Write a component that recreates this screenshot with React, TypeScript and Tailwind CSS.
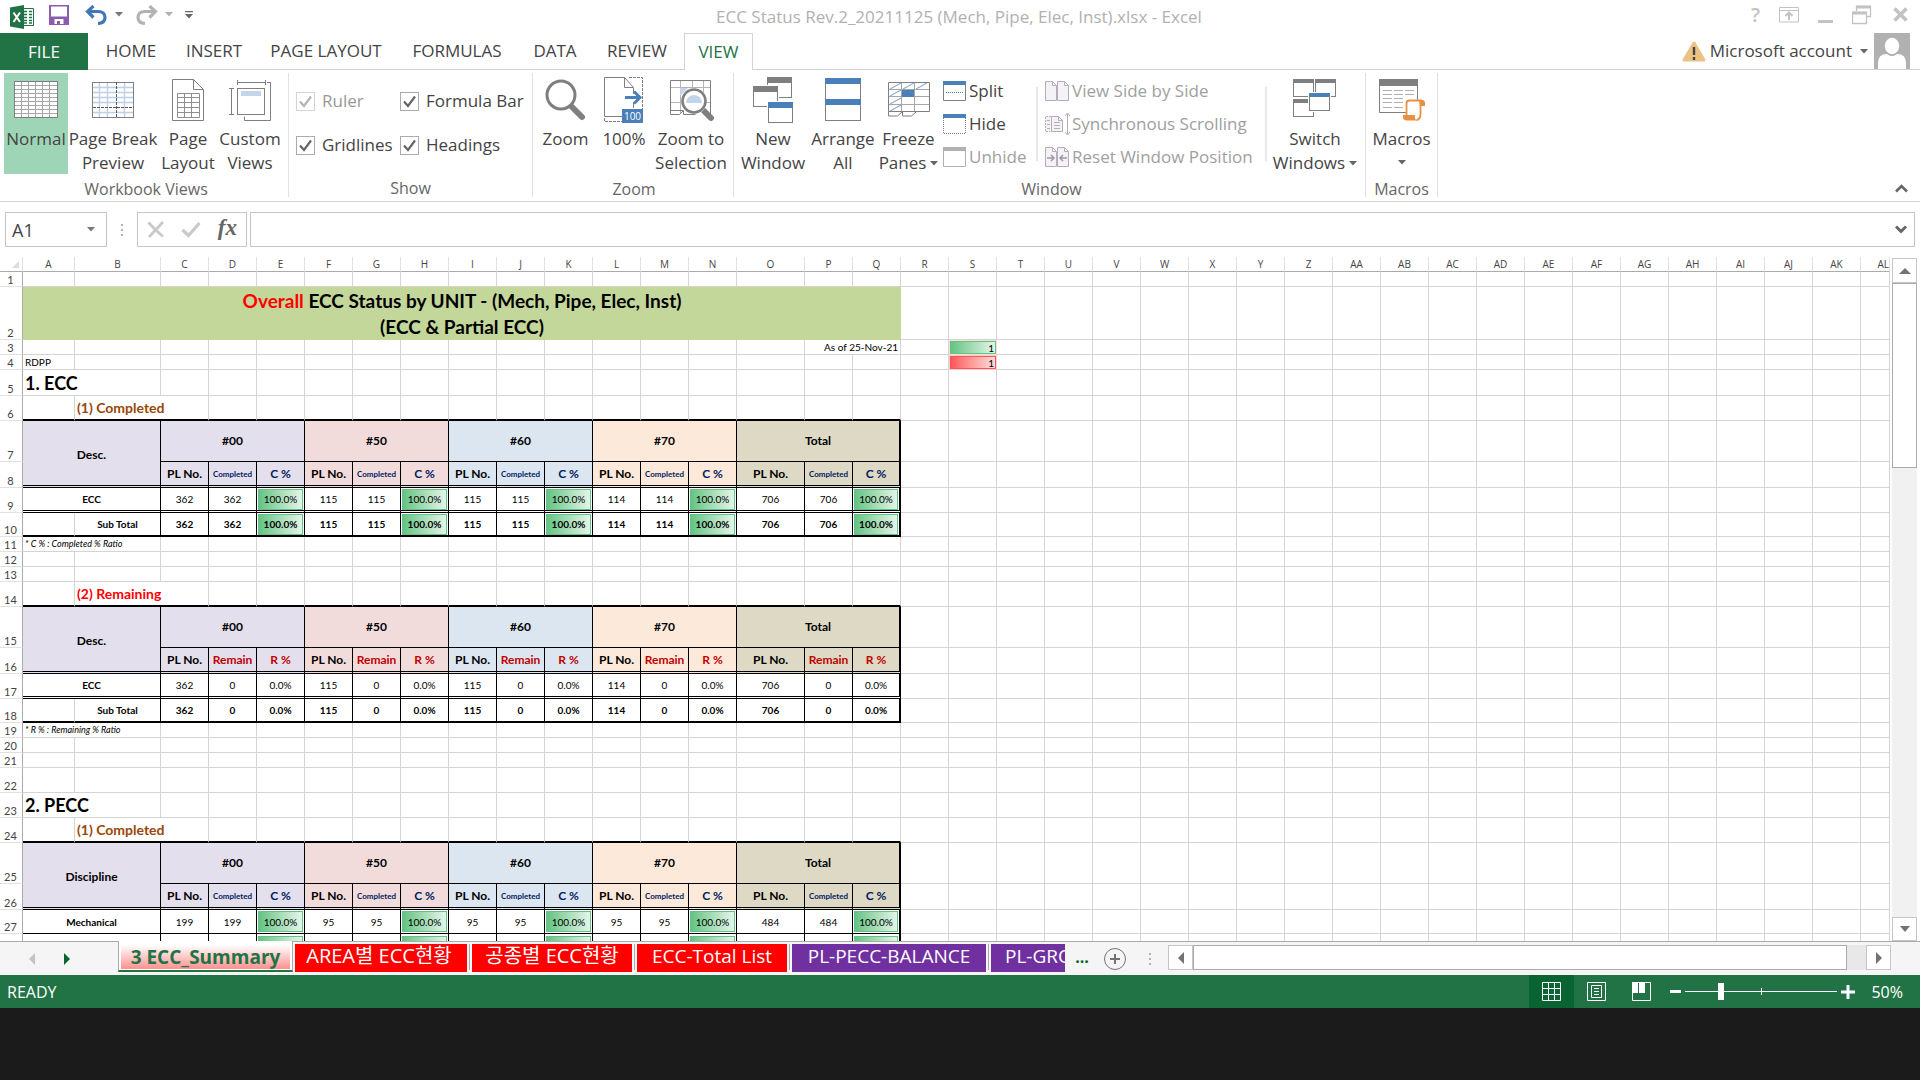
import React from "react";

/* ---------- Ribbon icons ---------- */

const G = "#7f7f7f";
const B = "#4a7fb8";

function NormalIcon() {
  return (
    <svg width="44" height="48" viewBox="0 0 44 48" fill="none">
      <rect x="0.5" y="5.5" width="43" height="36" fill="#fff" stroke={G} />
      <path d="M7.5 6v35M14.5 6v35M21.5 6v35M28.5 6v35M35.5 6v35M1 9.5h42M1 13.5h42M1 17.5h42M1 21.5h42M1 25.5h42M1 29.5h42M1 33.5h42M1 37.5h42" stroke="#a6a6a6" />
    </svg>
  );
}

function PageBreakIcon() {
  return (
    <svg width="42" height="48" viewBox="0 0 42 48" fill="none">
      <path d="M7.5 7v34M15.5 7v34M32.5 7v34M1 11.5h40M1 16.5h40M1 21.5h40M1 26.5h40M1 36.5h40" stroke="#bdd0e6" strokeWidth="1.4" />
      <rect x="0.5" y="6.5" width="41" height="35" stroke={G} />
      <path d="M24.5 6v36M1 31.5h40" stroke="#595959" strokeDasharray="3 1" />
    </svg>
  );
}

function PageLayoutIcon() {
  return (
    <svg width="32" height="48" viewBox="0 0 32 48" fill="none">
      <path d="M0.5 3.5h21l10 10v31h-31zM21.5 3.5v10h10" stroke={G} />
      <path d="M5.5 17.5h22v24h-22zM12.5 17.5v24M19.5 17.5v24M5.5 21.5h22M5.5 26.5h22M5.5 31.5h22M5.5 36.5h22" stroke="#8f8f8f" />
    </svg>
  );
}

function CustomViewsIcon() {
  return (
    <svg width="42" height="48" viewBox="0 0 42 48" fill="none">
      <path d="M8.5 4v5M36.5 4v5M8.5 6.5h28M0 12.5h5M0 38.5h5M2.5 12.5v26M38 6.5h3.500v38h-26v-4" stroke={G} />
      <rect x="8.5" y="12.5" width="27" height="26" stroke={G} />
      <rect x="12" y="15" width="20" height="5" fill="#c3d5ea" />
    </svg>
  );
}

function MagnifierIcon() {
  return (
    <svg width="42" height="48" viewBox="0 0 42 48" fill="none">
      <path d="M26 30l11 11" stroke={G} strokeWidth="6" strokeLinecap="round" />
      <circle cx="16" cy="19" r="14" fill="#fff" stroke={G} strokeWidth="3" />
    </svg>
  );
}

function HundredIcon() {
  return (
    <svg width="40" height="48" viewBox="0 0 40 48" fill="none">
      <path d="M25 1.5h13.500v44h-38v-4" stroke={G} strokeDasharray="3 1" />
      <path d="M18 40.500H0.500v-39h20l9 10h-9v-10M29.500 12v6M29.500 27v5" stroke={G} />
      <path d="M21 21.500h14M30 15.500l6 6l-6 6" stroke={B} strokeWidth="3" />
      <rect x="18" y="33" width="21" height="14" fill={B} />
      <text x="28.500" y="44" fill="#fff" fontSize="10" textAnchor="middle" fontFamily="Open Sans, sans-serif">100</text>
    </svg>
  );
}

function ZoomSelectionIcon() {
  return (
    <svg width="48" height="48" viewBox="-3 0 48 48" fill="none">
      <path d="M1 11.500h40M1 26.500h40M10.500 5v32M22.500 5v32M33.500 5v32" stroke="#b5b5b5" />
      <path d="M0.500 4.500h40v34M0.500 4.500v34h9l4 -4v4h12M1 34.500h12" stroke={G} />
      <path d="M10 12h8l-8 8z" fill="#c3d5ea" />
      <path d="M34 35l7 7" stroke={G} strokeWidth="6" strokeLinecap="round" />
      <circle cx="24" cy="25" r="13" fill="#fff" />
      <circle cx="24" cy="25" r="11.500" fill="#fff" stroke={G} strokeWidth="2.600" />
      <path d="M16 27a8 8 0 0 1 16 0z" fill="#c3d5ea" />
    </svg>
  );
}

function NewWindowIcon() {
  return (
    <svg width="40" height="48" viewBox="0 0 40 48" fill="none">
      <rect x="14.500" y="1.500" width="24" height="20" fill="#fff" stroke={G} />
      <rect x="14" y="1" width="25" height="6" fill={G} />
      <rect x="-1" y="9" width="27" height="23" fill="#fff" />
      <rect x="0.500" y="10.500" width="24" height="20" fill="#fff" stroke={G} />
      <rect x="0" y="10" width="25" height="6" fill={G} />
      <rect x="14" y="25" width="26" height="22" fill="#fff" />
      <rect x="15.500" y="26.500" width="24" height="20" fill="#fff" stroke={G} />
      <rect x="15" y="26" width="25" height="6" fill={B} />
    </svg>
  );
}

function ArrangeIcon() {
  return (
    <svg width="36" height="48" viewBox="0 0 36 48" fill="none">
      <rect x="0.500" y="2.500" width="35" height="42" fill="#fff" stroke={G} />
      <rect x="0" y="2" width="36" height="6" fill={B} />
      <rect x="0" y="23" width="36" height="6" fill={B} />
    </svg>
  );
}

function FreezeIcon() {
  return (
    <svg width="42" height="48" viewBox="0 0 42 48" fill="none">
      <path d="M1 13.500h40M1 20.500h40M1 28.500h40M13.500 7v28M26.500 7v28" stroke="#a6a6a6" />
      <path d="M2 13l11 -6M15 13l11 -6M28 13l11 -6M2 20l11 -6M2 28l11 -6M2 35l11 -6" stroke="#8fb1d8" strokeWidth="1.300" />
      <rect x="14" y="14" width="12" height="7" fill={B} />
      <path d="M0.500 6.500h41v29h-41zM0.500 35.500v4.500h9l5 -4.500M14.500 36v4h9l5 -4.500" stroke={G} />
    </svg>
  );
}

function SwitchIcon() {
  return (
    <svg width="44" height="48" viewBox="0 0 44 48" fill="none">
      <rect x="0.500" y="3.500" width="20" height="17" stroke={G} />
      <rect x="0" y="3" width="21" height="4" fill={G} />
      <rect x="22.500" y="3.500" width="20" height="17" stroke={G} />
      <rect x="22" y="3" width="21" height="4" fill={G} />
      <rect x="0.500" y="23.500" width="20" height="17" stroke={G} />
      <rect x="0" y="23" width="21" height="4" fill={G} />
      <rect x="15" y="16" width="23" height="20" fill="#fff" />
      <rect x="16.500" y="17.500" width="20" height="17" fill="#fff" stroke={G} />
      <rect x="16" y="17" width="21" height="4" fill={B} />
    </svg>
  );
}

function MacrosIcon() {
  return (
    <svg width="46" height="48" viewBox="0 0 46 48" fill="none">
      <path d="M0.500 3.500h38v33h-38z" stroke={G} />
      <rect x="0" y="3" width="39" height="7" fill={G} />
      <path d="M4 14.500h9M15 14.500h9M26 14.500h9M4 18.500h9M15 18.500h9M26 18.500h9M4 22.500h9M15 22.500h9M4 26.500h9M15 26.500h9M4 31.500h9M15 31.500h9" stroke="#b0b0b0" />
      <path d="M28 39V27q0 -3 3 -3h12v12q0 8 -4 8H28z" fill="#fff" />
      <path d="M27.500 39V27q0 -2.500 3 -2.500h11v13q0 6 -4 6.500" stroke="#e88f44" strokeWidth="1.800" />
      <path d="M40 24q6 -1 6 3v3h-5zM24 39h12q-1 5 3 5.500H27q-4 -1 -3 -5.500z" fill="#e88f44" />
    </svg>
  );
}

function SmallWindow({ color, dashed, line, bottom }: { color: string; dashed?: boolean; line?: boolean; bottom?: string }) {
  return (
    <svg width="24" height="20" viewBox="0 0 24 20" fill="none" className="shrink-0">
      <path d="M0.500 4v15.500h22V4" stroke={bottom || G} strokeDasharray={dashed ? "1 1" : undefined} />
      <rect x="0" y="0" width="23" height="4" fill={color} />
      {line && <path d="M3 11.500h18" stroke={B} strokeDasharray="1 1" />}
    </svg>
  );
}

function PagesIcon({ kind }: { kind: "side" | "sync" | "reset" }) {
  return (
    <svg width="26" height="24" viewBox="0 0 26 24" fill="#f6f0f8" stroke="#b3b0b5" className="shrink-0">
      {kind === "sync" ? (
        <>
          <path d="M6 4.500H0.500v15h5" strokeDasharray="2 1" />
          <path d="M6.500 4.500h7l4 4v11h-11zM13.500 4.500v4h4M9 10.500h6M9 13.500h6M9 16.500h6M2 8.500h3M2 12.500h3M2 16.500h3" />
          <path d="M22.500 2v20M20 4l2.500 -3l2.500 3M20 20l2.500 3l2.500 -3" fill="none" />
        </>
      ) : (
        <>
          <path d="M0.500 4.500h7l4 4v15h-11zM7.500 4.500v4h4M12.500 4.500h7l4 4v15h-11zM19.500 4.500v4h4" transform="translate(0 -2)" />
          {kind === "reset" && <path d="M2 13h7M6 10l3 3l-3 3M22 13h-7M18 10l-3 3l3 3" fill="none" stroke="#9d9a9f" strokeWidth="1.500" />}
        </>
      )}
    </svg>
  );
}

function Caret({ color = "#666" }: { color?: string }) {
  return (
    <svg width="8" height="5" viewBox="0 0 8 5" className="inline-block shrink-0">
      <path d="M0 0h8L4 4.500z" fill={color} />
    </svg>
  );
}

/* ---------- Ribbon parts ---------- */

function BigButton({ icon, lines, width, active, caret }: { icon: React.ReactNode; lines: string[]; width: string; active?: boolean; caret?: boolean }) {
  return (
    <button className={`flex h-[101px] shrink-0 flex-col items-center pt-[3px] text-[17px] leading-6 whitespace-nowrap ${width} ${active ? "bg-[#9fd5b7]" : ""}`}>
      <span className="mb-[3px] flex h-12 items-center">{icon}</span>
      {lines.map((l, i) => (
        <span key={i} className="flex h-6 items-center gap-1">
          {l}
          {caret && i === lines.length - 1 && <Caret />}
        </span>
      ))}
    </button>
  );
}

function Group({ label, width, children }: { label: string; width: string; children: React.ReactNode }) {
  return (
    <section aria-label={label} className={`flex shrink-0 flex-col border-r border-[#e1e1e1] ${width}`}>
      <div className="flex h-[101px]">{children}</div>
      <div className="flex h-6 items-center justify-center pt-1.5 text-base text-[#666]">{label}</div>
    </section>
  );
}

function Check({ id, label, disabled }: { id: string; label: string; disabled?: boolean }) {
  return (
    <div className={`flex h-6 items-center gap-[7px] text-[17px] whitespace-nowrap ${disabled ? "text-[#999]" : "text-[#444]"}`}>
      <span className="relative flex size-[19px]">
        <input id={id} type="checkbox" defaultChecked disabled={disabled} className={`size-[19px] appearance-none border bg-white ${disabled ? "border-[#d4d4d4]" : "border-[#ababab]"}`} />
        <svg width="19" height="19" viewBox="0 0 19 19" fill="none" className="pointer-events-none absolute inset-0">
          <path d="M4 9.500l4 4.500L15 4.500" stroke={disabled ? "#b5b5b5" : "#666"} strokeWidth="2.200" />
        </svg>
      </span>
      <label htmlFor={id}>{label}</label>
    </div>
  );
}

function SmallButton({ icon, label, disabled, gap }: { icon: React.ReactNode; label: string; disabled?: boolean; gap: string }) {
  return (
    <button disabled={disabled} className={`flex h-[33px] items-center text-[17px] whitespace-nowrap ${gap} ${disabled ? "text-[#a0a0a0]" : "text-[#444]"}`}>
      {icon}
      {label}
    </button>
  );
}

function TitleBar() {
  return (
    <header className="flex h-[33px] shrink-0 items-center">
      <div className="flex flex-1 items-center pl-2.5">
        <svg width="25" height="24" viewBox="0 0 25 24">
          <path d="M11 3.500h12.500v17H11z" fill="#fff" stroke="#217346" />
          <path d="M14 6.500h3M19 6.500h3M14 9.500h3M19 9.500h3M14 12.500h3M19 12.500h3M14 15.500h3M19 15.500h3M14 18h3M19 18h3" stroke="#217346" strokeWidth="1.500" />
          <path d="M0 2.500L14 0v24L0 21.500z" fill="#217346" />
          <path d="M3.500 7.500l6.500 9.500M10 7.500L3.500 17" stroke="#fff" strokeWidth="2" />
        </svg>
        <button aria-label="Save" className="mb-1 ml-3.5">
          <svg width="20" height="20" viewBox="0 0 20 20">
            <path d="M0 0h20v20H0z" fill="#8b5cad" />
            <path d="M2 1.500h16v10H2zM5.500 14h9v5H11v-3H8v3H5.500z" fill="#fff" />
          </svg>
        </button>
        <button aria-label="Undo" className="mb-1 ml-4 flex items-center gap-1.5">
          <svg width="24" height="20" viewBox="0 0 24 20" fill="none" stroke="#3f78b5" strokeWidth="3.200">
            <path d="M2 6.500h11q7 0 7 6q0 5.500 -7 6M8.500 1L2.500 6.500l6 6" />
          </svg>
          <Caret color="#777" />
        </button>
        <button aria-label="Redo" className="mb-1 ml-3 flex items-center gap-1.5">
          <svg width="24" height="20" viewBox="0 0 24 20" fill="none" stroke="#b3b3b3" strokeWidth="3.200">
            <path d="M21 6.500H10q-7 0 -7 6q0 5.500 7 6M14.500 1l6 5.500l-6 6" />
          </svg>
          <Caret color="#b3b3b3" />
        </button>
        <button aria-label="Customize Quick Access Toolbar" className="mb-1 ml-3">
          <svg width="8" height="8" viewBox="0 0 8 8">
            <path d="M0 0h8v1.300H0zM0 3h8L4 7.500z" fill="#666" />
          </svg>
        </button>
      </div>
      <h1 className="text-[17px] whitespace-nowrap text-[#b1b1b1]">ECC Status Rev.2_20211125 (Mech, Pipe, Elec, Inst).xlsx - Excel</h1>
      <div className="flex flex-1 items-center justify-end gap-[19px] pr-3 pb-1 text-[#c3c3c3]">
        <button aria-label="Help" className="text-xl leading-6 font-semibold">?</button>
        <button aria-label="Ribbon Display Options">
          <svg width="20" height="16" viewBox="0 0 20 16" fill="none" stroke="#c3c3c3">
            <path d="M0.500 0.500h19v14.500h-19zM0.500 3.500h19" />
            <path d="M10 13V6M6.500 9L10 5.500L13.500 9" strokeWidth="2" />
          </svg>
        </button>
        <button aria-label="Minimize" className="flex h-4 items-end">
          <span className="block h-[3px] w-[15px] bg-[#c3c3c3]" />
        </button>
        <button aria-label="Restore">
          <svg width="20" height="20" viewBox="0 0 20 20" fill="none" stroke="#c3c3c3">
            <path d="M4.500 6V1.500h14v10H15M4 2h15M0.500 7.500h14v11h-14zM0 8h15" strokeWidth="1.300" />
            <path d="M4 2h15M0 8h15" strokeWidth="3" />
          </svg>
        </button>
        <button aria-label="Close" className="ml-0.5">
          <svg width="15" height="15" viewBox="0 0 15 15" stroke="#c3c3c3" strokeWidth="3.600">
            <path d="M1.500 1.500l12 12M13.500 1.500l-12 12" />
          </svg>
        </button>
      </div>
    </header>
  );
}

const MENU = [
  ["HOME", "w-[86px]"],
  ["INSERT", "w-[80px]"],
  ["PAGE LAYOUT", "w-[144px]"],
  ["FORMULAS", "w-[118px]"],
  ["DATA", "w-[78px]"],
  ["REVIEW", "w-[86px]"],
];

function MenuTabs() {
  return (
    <nav className="flex h-[37px] shrink-0 items-stretch border-b border-[#d4d4d4] text-[17px]">
      <button className="h-[37px] w-[88px] bg-[#217346] text-white">FILE</button>
      {MENU.map(([t, w]) => (
        <button key={t} className={`whitespace-nowrap ${w}`}>{t}</button>
      ))}
      <button className="ml-1 h-[37px] w-[69px] border border-b-0 border-[#d4d4d4] bg-white text-[#217346]">VIEW</button>
      <div className="ml-auto flex items-center pr-2.5">
        <svg width="24" height="21" viewBox="0 0 24 21">
          <path d="M12 2L22 19H2z" fill="#eac282" stroke="#eac282" strokeWidth="3" strokeLinejoin="round" />
          <path d="M12 6v8M12 16v3" stroke="#444" strokeWidth="2.400" />
        </svg>
        <button className="ml-1 flex items-center gap-2 text-[17px] whitespace-nowrap">
          Microsoft account
          <Caret />
        </button>
        <svg width="36" height="36" viewBox="0 0 36 36" className="ml-1.5">
          <path d="M0 0h36v36H0z" fill="#b1b1b1" />
          <path d="M4 36v-6q0 -9 9 -9q5 4 10 0q9 0 9 9v6z" fill="#fff" />
          <ellipse cx="18" cy="13" rx="8" ry="9" fill="#fff" stroke="#b1b1b1" strokeWidth="1.500" />
        </svg>
      </div>
    </nav>
  );
}

function Ribbon() {
  return (
    <div className="flex h-[132px] shrink-0 border-b border-[#d4d4d4] pt-[3px] pb-1">
      <Group label="Workbook Views" width="w-[289px] pl-1">
        <BigButton icon={<NormalIcon />} lines={["Normal"]} width="w-16" active />
        <BigButton icon={<PageBreakIcon />} lines={["Page Break", "Preview"]} width="w-[90px]" />
        <BigButton icon={<PageLayoutIcon />} lines={["Page", "Layout"]} width="w-[60px]" />
        <BigButton icon={<CustomViewsIcon />} lines={["Custom", "Views"]} width="w-[64px]" />
      </Group>
      <Group label="Show" width="w-[244px]">
        <div className="grid grid-cols-[104px_auto] content-start gap-y-5 pt-4 pl-[7px]">
          <Check id="ruler" label="Ruler" disabled />
          <Check id="formula-bar" label="Formula Bar" />
          <Check id="gridlines" label="Gridlines" />
          <Check id="headings" label="Headings" />
        </div>
      </Group>
      <Group label="Zoom" width="w-[201px] pl-0.5">
        <BigButton icon={<MagnifierIcon />} lines={["Zoom"]} width="w-[61px]" />
        <BigButton icon={<HundredIcon />} lines={["100%"]} width="w-14" />
        <BigButton icon={<ZoomSelectionIcon />} lines={["Zoom to", "Selection"]} width="w-[78px]" />
      </Group>
      <Group label="Window" width="w-[632px] pl-1">
        <BigButton icon={<NewWindowIcon />} lines={["New", "Window"]} width="w-[70px]" />
        <BigButton icon={<ArrangeIcon />} lines={["Arrange", "All"]} width="w-[70px]" />
        <BigButton icon={<FreezeIcon />} lines={["Freeze", "Panes"]} width="w-[61px]" caret />
        <div className="ml-1 flex w-[93px] flex-col pt-px">
          <SmallButton gap="gap-0.5" icon={<SmallWindow color={B} line />} label="Split" />
          <SmallButton gap="gap-0.5" icon={<SmallWindow color={B} dashed />} label="Hide" />
          <SmallButton gap="gap-0.5" icon={<SmallWindow color="#b1b1b1" bottom="#b1b1b1" />} label="Unhide" disabled />
        </div>
        <div className="mt-3.5 h-[74px] w-0.5 bg-[#e9e9e9]" />
        <div className="flex w-[227px] flex-col pt-px pl-[7px]">
          <SmallButton gap="gap-px" icon={<PagesIcon kind="side" />} label="View Side by Side" disabled />
          <SmallButton gap="gap-px" icon={<PagesIcon kind="sync" />} label="Synchronous Scrolling" disabled />
          <SmallButton gap="gap-px" icon={<PagesIcon kind="reset" />} label="Reset Window Position" disabled />
        </div>
        <div className="mt-3.5 h-[74px] w-0.5 bg-[#e9e9e9]" />
        <BigButton icon={<SwitchIcon />} lines={["Switch", "Windows"]} width="w-24" caret />
      </Group>
      <Group label="Macros" width="w-[72px]">
        <BigButton icon={<MacrosIcon />} lines={["Macros", ""]} width="w-[71px]" caret />
      </Group>
      <button aria-label="Collapse the Ribbon" className="mt-auto mr-3 mb-1 ml-auto">
        <svg width="13" height="9" viewBox="0 0 13 9" fill="none" stroke="#666" strokeWidth="2.600">
          <path d="M1 7.500l5.500 -5.500L12 7.500" />
        </svg>
      </button>
    </div>
  );
}

function FormulaBar() {
  return (
    <div className="flex h-[55px] shrink-0 pt-2.5 pr-[5px] pb-2.5 pl-[5px]">
      <div className="flex h-[35px] w-[102px] items-center border border-[#c6c6c6] pr-[11px]">
        <input aria-label="Name Box" defaultValue="A1" className="w-full min-w-0 pl-1.5 text-lg outline-none" />
        <Caret color="#777" />
      </div>
      <div className="flex h-[35px] w-[30px] flex-col items-center justify-center gap-[3px]">
        <i className="size-0.5 bg-[#b1b1b1]" />
        <i className="size-0.5 bg-[#b1b1b1]" />
        <i className="size-0.5 bg-[#b1b1b1]" />
      </div>
      <div className="mr-[3px] flex h-[35px] w-[110px] items-center justify-between border border-[#c6c6c6] px-[9px]">
        <button aria-label="Cancel">
          <svg width="18" height="17" viewBox="0 0 18 17" stroke="#c9c9c9" fill="none">
            <path d="M1.500 1.500Q8 9 16 15.500M16 1L2 16" strokeWidth="2.800" />
          </svg>
        </button>
        <button aria-label="Enter">
          <svg width="20" height="17" viewBox="0 0 20 17" stroke="#c9c9c9" fill="none">
            <path d="M1.500 9l6 5.500L18.500 2" strokeWidth="3.200" />
          </svg>
        </button>
        <button aria-label="Insert Function" className="pb-1 font-['Liberation_Serif',serif] text-[23px] leading-6 font-semibold text-[#666] italic">fx</button>
      </div>
      <div className="flex h-[35px] flex-1 items-center border border-[#c6c6c6] pr-[7px]">
        <input aria-label="Formula" className="h-full min-w-0 flex-1 px-2 outline-none" />
        <button aria-label="Expand Formula Bar">
          <svg width="12" height="9" viewBox="0 0 12 9" fill="none" stroke="#666" strokeWidth="3">
            <path d="M1 1.500l5 5l5 -5" />
          </svg>
        </button>
      </div>
    </div>
  );
}

/* ---------- Worksheet ---------- */

const COLS = ["A", "B", "C", "D", "E", "F", "G", "H", "I", "J", "K", "L", "M", "N", "O", "P", "Q", "R", "S", "T", "U", "V", "W", "X", "Y", "Z", "AA", "AB", "AC", "AD", "AE", "AF", "AG", "AH", "AI", "AJ", "AK", "AL"];

function colWidth(c: string) {
  if (c === "A") return "w-[52px]";
  if (c === "B") return "w-[86px]";
  if (c === "O") return "w-[68px]";
  if (c === "AL") return "w-[29px]";
  return "w-12";
}

type Cell = { t?: React.ReactNode; span?: number; rows?: number; cls?: string };

const GRID = "border-r border-b border-[#d4d4d4]";
const TINTS = ["bg-[#e4dfec]", "bg-[#f2dcdb]", "bg-[#dce6f1]", "bg-[#fde9d9]", "bg-[#ddd9c4]"];

const blanks = (n: number, cls = GRID): Cell[] => Array.from({ length: n }, () => ({ cls }));

function GreenBar({ children }: { children?: React.ReactNode }) {
  return (
    <div className="mx-px flex h-[21px] items-center justify-center border border-[#63c384] bg-linear-to-r from-[#63c384] to-[#e3f5e9]">
      {children}
    </div>
  );
}

function Row({ n, h, cells }: { n: number; h: string; cells: Cell[] }) {
  const used = cells.reduce((s, c) => s + (c.span || 1), 0);
  const covered = [8, 16, 26].includes(n) ? 2 : 0;
  const all = [...cells, ...blanks(COLS.length - used - covered)];
  return (
    <tr className={h}>
      <th className="border-r border-b border-r-[#ababab] border-b-[#e1e1e1] p-0 pr-px align-bottom text-[11px] leading-[13px] font-normal text-[#444]">{n}</th>
      {all.map((c, i) => (
        <td key={i} colSpan={c.span} rowSpan={c.rows} className={`p-0 whitespace-nowrap ${c.cls || GRID}`}>
          {c.t}
        </td>
      ))}
    </tr>
  );
}

/* Right edge of a table column: the last one carries the heavy outer frame. */
const edge = (last: boolean) => (last ? "border-r-2 border-r-black" : "border-r border-r-black");

function groupRow(title: string): Cell[] {
  return [
    { t: title, span: 2, rows: 2, cls: "border-r border-r-black border-b-3 [border-bottom-style:double] border-b-black bg-[#e4dfec] pt-[3px] text-center text-[12px] font-bold" },
    ...["#00", "#50", "#60", "#70", "Total"].map((t, i) => ({
      t,
      span: 3,
      cls: `text-center text-[12px] font-bold border-b border-b-black ${edge(i === 4)} ${TINTS[i]}`,
    })),
  ];
}

function headRow(mid: string, pct: string, red: boolean): Cell[] {
  const color = red ? "text-[#c00000]" : "text-[#002060]";
  return TINTS.flatMap((bg, g) =>
    ["PL No.", mid, pct].map((t, i) => ({
      t,
      cls: `text-center font-bold border-b-3 [border-bottom-style:double] border-b-black ${edge(g === 4 && i === 2)} ${bg} ${i === 0 ? "pt-px text-[12px]" : color} ${i === 1 && !red ? "text-[8px]" : "pt-px text-[12px]"}`,
    }))
  );
}

function dataRow(values: string[][], bottom: string, bold: boolean, bar: boolean): Cell[] {
  return values.flatMap((v, g) =>
    v.map((t, i) => ({
      t: bar && i === 2 ? <GreenBar>{t}</GreenBar> : t,
      cls: `text-center text-[10px] border-b-black ${bold ? "font-bold" : ""} ${bottom} ${edge(g === 4 && i === 2)}`,
    }))
  );
}

const DOUBLE = "border-b-3 [border-bottom-style:double]";
const THICK = "border-b-2";
const THIN = "border-b";
const UNITS = ["362", "115", "115", "114", "706"];
const MECH = ["199", "95", "95", "95", "484"];
const done = (n: string[]) => n.map((v) => [v, v, "100.0%"]);
const left = UNITS.map((v) => [v, "0", "0.0%"]);

function subtitle(text: string, color: string): Cell[] {
  const b = "border-b-2 border-b-black border-r border-r-[#d4d4d4]";
  return [{ cls: b }, { t: text, span: 2, cls: `${b} pl-0.5 text-[14px] font-bold ${color}` }, ...blanks(14, b)];
}

const label = (text: string, bottom: string): Cell => ({
  t: text,
  span: 2,
  cls: `text-center text-[10px] font-bold border-r border-r-black border-b-black ${bottom}`,
});

const subTotal: Cell[] = [
  { cls: "border-r border-r-[#d4d4d4] border-b-2 border-b-black" },
  { t: "Sub Total", cls: "text-center text-[10px] font-bold border-r border-r-black border-b-2 border-b-black" },
];

const heading = (text: string): Cell => ({ t: text, span: 2, cls: `${GRID} pl-0.5 text-[18px] leading-6 font-bold` });
const note = (text: string): Cell => ({ t: text, span: 2, cls: `${GRID} pl-0.5 text-[9px] leading-3 italic` });

function Sheet() {
  return (
    <table className="w-[1890px] table-fixed border-separate border-spacing-0 font-['Lato',sans-serif] text-[10px] leading-[14px] text-black">
      <colgroup>
        <col className="w-[23px]" />
        {COLS.map((c) => (
          <col key={c} className={colWidth(c)} />
        ))}
      </colgroup>
      <thead className="font-['Open_Sans',sans-serif]">
        <tr className="h-[15px]">
          <th className="border-r border-b border-r-[#e1e1e1] border-b-[#ababab] p-0">
            <svg width="7" height="7" viewBox="0 0 7 7" className="ml-auto mr-[3px]">
              <path d="M7 0v7H0z" fill="#dcdcdc" />
            </svg>
          </th>
          {COLS.map((c) => (
            <th key={c} className="border-r border-b border-r-[#e1e1e1] border-b-[#ababab] p-0 text-[10px] font-normal text-[#444]">
              <span className={c === "AL" ? "block text-right" : ""}>{c}</span>
            </th>
          ))}
        </tr>
      </thead>
      <tbody>
        <Row n={1} h="h-[15px]" cells={[]} />
        <Row
          n={2}
          h="h-[53px]"
          cells={[
            {
              t: (
                <>
                  <span className="text-[#ff0000]">Overall</span> ECC Status by UNIT - (Mech, Pipe, Elec, Inst)
                  <br />
                  (ECC &amp; Partial ECC)
                </>
              ),
              span: 17,
              cls: "bg-[#c4d79b] text-center text-[19px] leading-[26px] font-bold",
            },
          ]}
        />
        <Row
          n={3}
          h="h-[15px]"
          cells={[
            ...blanks(15),
            { t: "As of 25-Nov-21", span: 2, cls: `${GRID} pr-0.5 text-right leading-3` },
            ...blanks(1),
            {
              t: <div className="h-[13px] border border-[#63c384] bg-linear-to-r from-[#63c384] to-[#e3f5e9] pr-px text-right leading-3">1</div>,
              cls: "border border-[#fbe0cf]",
            },
          ]}
        />
        <Row
          n={4}
          h="h-[15px]"
          cells={[
            { t: "RDPP", cls: `${GRID} pl-0.5` },
            ...blanks(17),
            {
              t: <div className="h-[13px] border border-[#ff555a] bg-linear-to-r from-[#ff555a] to-[#ffdcdd] pr-px text-right leading-3">1</div>,
              cls: "border border-[#f2cfd0]",
            },
          ]}
        />
        <Row n={5} h="h-[26px]" cells={[heading("1. ECC")]} />
        <Row n={6} h="h-[25px]" cells={subtitle("(1) Completed", "text-[#974706]")} />
        <Row n={7} h="h-[41px]" cells={groupRow("Desc.")} />
        <Row n={8} h="h-[26px]" cells={headRow("Completed", "C %", false)} />
        <Row n={9} h="h-[25px]" cells={[label("ECC", DOUBLE), ...dataRow(done(UNITS), DOUBLE, false, true)]} />
        <Row n={10} h="h-[24px]" cells={[...subTotal, ...dataRow(done(UNITS), THICK, true, true)]} />
        <Row n={11} h="h-[15px]" cells={[note("* C % : Completed % Ratio")]} />
        <Row n={12} h="h-[15px]" cells={[]} />
        <Row n={13} h="h-[15px]" cells={[]} />
        <Row n={14} h="h-[25px]" cells={subtitle("(2) Remaining", "text-[#ff0000]")} />
        <Row n={15} h="h-[41px]" cells={groupRow("Desc.")} />
        <Row n={16} h="h-[26px]" cells={headRow("Remain", "R %", true)} />
        <Row n={17} h="h-[25px]" cells={[label("ECC", DOUBLE), ...dataRow(left, DOUBLE, false, false)]} />
        <Row n={18} h="h-[24px]" cells={[...subTotal, ...dataRow(left, THICK, true, false)]} />
        <Row n={19} h="h-[15px]" cells={[note("* R % : Remaining % Ratio")]} />
        <Row n={20} h="h-[15px]" cells={[]} />
        <Row n={21} h="h-[15px]" cells={[]} />
        <Row n={22} h="h-[25px]" cells={[]} />
        <Row n={23} h="h-[25px]" cells={[heading("2. PECC")]} />
        <Row n={24} h="h-[25px]" cells={subtitle("(1) Completed", "text-[#974706]")} />
        <Row n={25} h="h-[41px]" cells={groupRow("Discipline")} />
        <Row n={26} h="h-[26px]" cells={headRow("Completed", "C %", false)} />
        <Row n={27} h="h-[24px]" cells={[label("Mechanical", THIN), ...dataRow(done(MECH), THIN, false, true)]} />
        <Row n={28} h="h-[25px]" cells={[label("", THIN), ...dataRow(MECH.map(() => ["", "", ""]), THIN, false, true)]} />
      </tbody>
    </table>
  );
}

/* ---------- Scroll bars, sheet tabs, status bar ---------- */

function Arrow({ d, color = "#737373" }: { d: string; color?: string }) {
  return (
    <svg width="12" height="12" viewBox="0 0 12 12">
      <path d={d} fill={color} />
    </svg>
  );
}

function VerticalScroll() {
  return (
    <div className="flex w-[30px] shrink-0 flex-col bg-white pt-px pr-[3px] pl-0.5">
      <button aria-label="Scroll up" className="flex h-[25px] shrink-0 items-center justify-center border border-[#c6c6c6] bg-white">
        <Arrow d="M0 9h12L6 3z" />
      </button>
      <div className="flex-1 bg-[#f1f1f1]">
        <div className="h-[185px] border border-[#ababab] bg-white" />
      </div>
      <button aria-label="Scroll down" className="flex h-6 shrink-0 items-center justify-center border border-[#c6c6c6] bg-white">
        <Arrow d="M1 3h10L6 9z" />
      </button>
    </div>
  );
}

const SHEETS = [
  ["AREA별 ECC현황", "w-[172px] pr-1 text-[20px]", "bg-[#ff0000]"],
  ["공종별 ECC현황", "w-[160px] text-[20px]", "bg-[#ff0000]"],
  ["ECC-Total List", "w-[150px] text-[19px]", "bg-[#ff0000]"],
  ["PL-PECC-BALANCE", "w-[194px] text-[19px]", "bg-[#7030a0]"],
];

function SheetTabs() {
  return (
    <div className="flex h-[34px] shrink-0 border-t border-[#ababab] bg-[#f5f5f5]">
      <div className="flex w-[118px] shrink-0 items-center pl-[26px]">
        <button aria-label="Previous sheet">
          <Arrow d="M9 0v12L3 6z" color="#c3c3c3" />
        </button>
        <button aria-label="Next sheet" className="ml-6">
          <Arrow d="M2 0v12L8 6z" color="#0a6332" />
        </button>
      </div>
      <button className="-mt-px h-[31px] w-[175px] shrink-0 border-r border-b-2 border-l border-r-[#ababab] border-b-[#217346] border-l-[#ababab] bg-white px-0.5 pt-1 pb-0.5">
        <span className="flex h-6 items-center justify-center bg-linear-to-b from-white to-[#ff8f8f] text-[19px] font-bold whitespace-nowrap text-[#217346]">3 ECC_Summary</span>
      </button>
      {SHEETS.map(([name, w, bg]) => (
        <div key={name} className="flex shrink-0 pt-0.5 pl-0.5">
          <button className={`h-7 pb-1 leading-6 whitespace-nowrap text-white ${w} ${bg}`}>{name}</button>
          <span className="ml-0.5 h-[26px] w-px bg-[#ababab]" />
        </div>
      ))}
      <div className="w-[76px] shrink-0 overflow-hidden pt-0.5 pl-0.5">
        <button className="h-7 w-[74px] bg-[#7030a0] pb-1 pl-3.5 text-left text-[19px] leading-6 whitespace-nowrap text-white">PL-GRO</button>
      </div>
      <button className="w-[34px] shrink-0 pb-1 text-base leading-7 font-bold text-[#0a6332]">...</button>
      <button aria-label="New sheet" className="ml-1 shrink-0">
        <svg width="24" height="24" viewBox="0 0 24 24" fill="none" stroke="#737373">
          <circle cx="12" cy="12" r="10.500" />
          <path d="M12 7v10M7 12h10" strokeWidth="2" />
        </svg>
      </button>
      <div className="flex w-[41px] shrink-0 flex-col items-center justify-center gap-[3px] pl-1">
        <i className="size-0.5 bg-[#b1b1b1]" />
        <i className="size-0.5 bg-[#b1b1b1]" />
        <i className="size-0.5 bg-[#b1b1b1]" />
      </div>
      <div className="mt-[3px] mr-[29px] flex h-[25px] min-w-0 flex-1 bg-[#e8e8e8]">
        <button aria-label="Scroll left" className="flex w-[25px] shrink-0 items-center justify-center border border-[#c6c6c6] bg-white">
          <Arrow d="M9 0v12L3 6z" />
        </button>
        <div className="min-w-0 flex-1 border border-[#ababab] bg-white" />
        <div className="w-[19px] shrink-0" />
        <button aria-label="Scroll right" className="flex w-[25px] shrink-0 items-center justify-center border border-[#c6c6c6] bg-white">
          <Arrow d="M3 0v12l6 -6z" />
        </button>
      </div>
    </div>
  );
}

function StatusBar() {
  return (
    <footer className="flex h-[33px] shrink-0 items-center bg-[#217346] text-white">
      <span className="flex-1 pl-[7px] text-base">READY</span>
      <button aria-label="Normal view" className="flex h-full w-[45px] items-center justify-center bg-[#0a6332]">
        <svg width="19" height="19" viewBox="0 0 19 19" fill="none" stroke="#fff">
          <path d="M0.500 0.500h18v18h-18zM6.500 0v19M12.500 0v19M0 6.500h19M0 12.500h19" />
        </svg>
      </button>
      <button aria-label="Page Layout view" className="flex h-full w-[45px] items-center justify-center">
        <svg width="19" height="19" viewBox="0 0 19 19" fill="none" stroke="#fff">
          <path d="M0.500 0.500h18v18h-18zM4.500 3.500h10v12h-10zM7 6.500h5M7 9.500h5M7 12.500h5" />
        </svg>
      </button>
      <button aria-label="Page Break Preview" className="flex h-full w-[45px] items-center justify-center">
        <svg width="19" height="19" viewBox="0 0 19 19" fill="none" stroke="#fff">
          <path d="M0.500 0.500h18v18h-18z" />
          <path d="M0 0h6v11H0zM7 0h6v11H7z" fill="#fff" stroke="none" />
        </svg>
      </button>
      <button aria-label="Zoom out" className="ml-[5px] flex w-3 justify-center">
        <span className="h-[3px] w-[11px] bg-white" />
      </button>
      <div className="relative ml-1 flex h-[19px] w-[152px] items-center">
        <input
          type="range"
          aria-label="Zoom level"
          min={0}
          max={100}
          defaultValue={22}
          className="h-[17px] w-full appearance-none bg-transparent [&::-webkit-slider-runnable-track]:h-px [&::-webkit-slider-runnable-track]:bg-white [&::-webkit-slider-thumb]:-mt-2 [&::-webkit-slider-thumb]:h-[17px] [&::-webkit-slider-thumb]:w-1.5 [&::-webkit-slider-thumb]:appearance-none [&::-webkit-slider-thumb]:bg-white"
        />
        <span className="pointer-events-none absolute top-1.5 left-1/2 h-[7px] w-px bg-white" />
      </div>
      <button aria-label="Zoom in" className="ml-1">
        <svg width="14" height="14" viewBox="0 0 14 14" stroke="#fff" strokeWidth="3">
          <path d="M7 0v14M0 7h14" />
        </svg>
      </button>
      <button className="mr-[17px] ml-4 text-base">50%</button>
    </footer>
  );
}

export default function App() {
  return (
    <div className="flex h-screen flex-col overflow-hidden bg-[#1b1b1b] pb-[72px] font-['Open_Sans','Noto_Sans_CJK_KR',sans-serif] text-[#444]">
      <div className="flex min-h-0 flex-1 flex-col bg-white">
        <TitleBar />
        <MenuTabs />
        <Ribbon />
        <FormulaBar />
        <main className="flex min-h-0 flex-1">
          <div className="min-w-0 flex-1 overflow-hidden">
            <Sheet />
          </div>
          <VerticalScroll />
        </main>
        <SheetTabs />
        <StatusBar />
      </div>
    </div>
  );
}
